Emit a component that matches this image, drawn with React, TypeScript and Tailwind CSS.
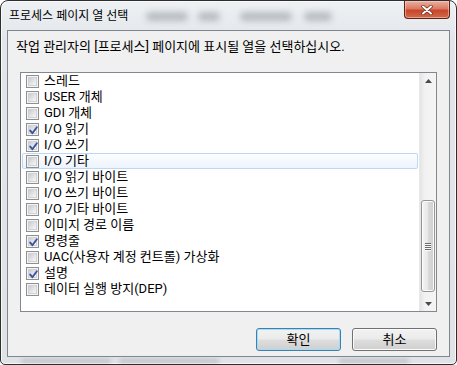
import React from "react";

const items: [string, boolean][] = [
  ["스레드", false],
  ["USER 개체", false],
  ["GDI 개체", false],
  ["I/O 읽기", true],
  ["I/O 쓰기", true],
  ["I/O 기타", false],
  ["I/O 읽기 바이트", false],
  ["I/O 쓰기 바이트", false],
  ["I/O 기타 바이트", false],
  ["이미지 경로 이름", false],
  ["명령줄", true],
  ["UAC(사용자 계정 컨트롤) 가상화", false],
  ["설명", true],
  ["데이터 실행 방지(DEP)", false],
];

const focusedRow = 5;

function Check({ checked }: { checked: boolean }) {
  return (
    <span className="relative flex h-[13px] w-[13px] shrink-0 items-center justify-center border border-[#8e8f8f] bg-[#f4f4f4]">
      <span className="h-[9px] w-[9px] border border-[#d0d2d5] bg-[linear-gradient(135deg,#c8ccd2,#e6e7e9_60%,#f6f6f6)]" />
      {checked ? (
        <svg className="absolute left-[1px] top-[1px]" width="11" height="11" viewBox="0 0 11 11">
          <path d="M2.2 5.6 L4.4 8.2 L8.8 2.2" fill="none" stroke="#3a52a0" strokeWidth="1.9" strokeLinecap="round" strokeLinejoin="round" />
        </svg>
      ) : null}
    </span>
  );
}

function Arrow({ up }: { up: boolean }) {
  return (
    <svg width="7" height="4" viewBox="0 0 7 4">
      <polygon points={up ? "0,4 3.5,0 7,4" : "0,0 7,0 3.5,4"} fill="#4a4a4a" />
    </svg>
  );
}

function Scrollbar() {
  return (
    <div className="flex w-[17px] shrink-0 flex-col border-l border-[#e8e8e8] bg-[linear-gradient(90deg,#e4e4e4,#f2f2f2_30%,#f4f4f4)]">
      <div className="flex h-[17px] items-center justify-center pb-[2px]">
        <Arrow up />
      </div>
      <div className="flex flex-1 flex-col justify-end px-[1px] pb-[2px]">
        <div className="flex h-[92px] flex-col items-center justify-center gap-[1px] rounded-[3px] border border-[#959595] bg-[linear-gradient(90deg,#f4f4f4,#e9e9e9_45%,#d9d9d9_55%,#cfcfcf)] shadow-[inset_0_0_0_1px_#fbfbfb]">
          {[0, 1, 2, 3].map((i) => (
            <span key={i} className="h-[1px] w-[6px] bg-[#6a6a6a] shadow-[0_1px_0_#fafafa]" />
          ))}
        </div>
      </div>
      <div className="flex h-[17px] items-center justify-center pt-[2px]">
        <Arrow up={false} />
      </div>
    </div>
  );
}

function WinButton({ label, isDefault }: { label: string; isDefault?: boolean }) {
  return (
    <button
      type="button"
      className={`flex h-[23px] w-[85px] items-center justify-center rounded-[3px] border text-[13px] leading-none text-black bg-[linear-gradient(#f2f2f2,#ebebeb_48%,#dddddd_52%,#cfcfcf)] ${
        isDefault
          ? "border-[#3c7fb1] shadow-[inset_0_0_0_1px_#a6dcf4]"
          : "border-[#707070] shadow-[inset_0_0_0_1px_#fbfbfb]"
      }`}
    >
      {label}
    </button>
  );
}

export default function App() {
  return (
    <div
      className="flex h-[365px] w-[457px] flex-col overflow-hidden rounded-t-[8px] rounded-b-[5px] border border-[#2e2e2e] bg-[linear-gradient(#eef1f4,#e2e6ea_40px,#dfe3e7)] text-black shadow-[inset_0_0_0_1px_#f7f9fb]"
      style={{ fontFamily: 'Roboto, "Noto Sans CJK KR", sans-serif' }}
    >
      {/* 제목 표시줄 */}
      <div className="flex h-[29px] shrink-0 items-start pl-[8px] pr-[6px]">
        <span className="pt-[7px] text-[12px] leading-[16px]">프로세스 페이지 열 선택</span>
        <div className="ml-[18px] mt-[11px] flex items-center">
          <span className="h-[9px] w-[42px] rounded-full bg-[#a3a8ae] opacity-70 blur-[3px]" />
          <span className="ml-[10px] h-[9px] w-[22px] rounded-full bg-[#a3a8ae] opacity-70 blur-[3px]" />
          <span className="ml-[20px] h-[9px] w-[52px] rounded-full bg-[#a3a8ae] opacity-70 blur-[3px]" />
          <span className="ml-[12px] h-[9px] w-[28px] rounded-full bg-[#a3a8ae] opacity-70 blur-[3px]" />
        </div>
        <button
          type="button"
          className="ml-auto flex h-[18px] w-[46px] items-center justify-center rounded-b-[4px] border border-t-0 border-[#5e2115] bg-[linear-gradient(#eab0a2,#dc7a62_45%,#c8462b_55%,#d06a4b)] shadow-[inset_0_0_0_1px_rgba(255,220,210,0.5)]"
        >
          <svg width="12" height="10" viewBox="0 0 12 10">
            <path d="M2 1.5 L10 8.5 M10 1.5 L2 8.5" stroke="#6a2a1c" strokeWidth="3.4" strokeLinecap="round" />
            <path d="M2 1.5 L10 8.5 M10 1.5 L2 8.5" stroke="#ffffff" strokeWidth="2" strokeLinecap="round" />
          </svg>
        </button>
      </div>

      {/* 클라이언트 영역 */}
      <div className="mx-[6px] flex h-[327px] shrink-0 flex-col border border-[#80868d] bg-[#f0f0f0]">
        <p className="ml-[8px] mt-[8px] whitespace-nowrap text-[13px] leading-[16px]">
          작업 관리자의 [프로세스] 페이지에 표시될 열을 선택하십시오.
        </p>

        <div className="ml-[12px] mt-[17px] flex h-[240px] w-[417px] border border-[#828790] bg-white">
          <div className="flex flex-1 flex-col">
            {items.map(([label, checked], i) => (
              <div
                key={label}
                className={`mx-[1px] flex h-[16px] items-center gap-[5px] rounded-[2px] border pl-[3px] ${
                  i === focusedRow
                    ? "border-[#bcd8f7] bg-[linear-gradient(#fcfdff,#edf4fd)]"
                    : "border-transparent"
                }`}
              >
                <Check checked={checked} />
                <span className="whitespace-nowrap text-[13px] leading-[16px]">{label}</span>
              </div>
            ))}
          </div>
          <Scrollbar />
        </div>

        <div className="mt-[16px] flex justify-end gap-[11px] pr-[12px]">
          <WinButton label="확인" isDefault />
          <WinButton label="취소" />
        </div>
      </div>

      {/* 아래 테두리 */}
      <div className="flex h-[7px] items-center pl-[20px]">
        <span className="h-[4px] w-[90px] rounded-full bg-[#a3a8ae] opacity-60 blur-[2px]" />
        <span className="ml-[8px] h-[4px] w-[100px] rounded-full bg-[#a3a8ae] opacity-60 blur-[2px]" />
        <span className="ml-[120px] h-[4px] w-[70px] rounded-full bg-[#a3a8ae] opacity-60 blur-[2px]" />
      </div>
    </div>
  );
}
